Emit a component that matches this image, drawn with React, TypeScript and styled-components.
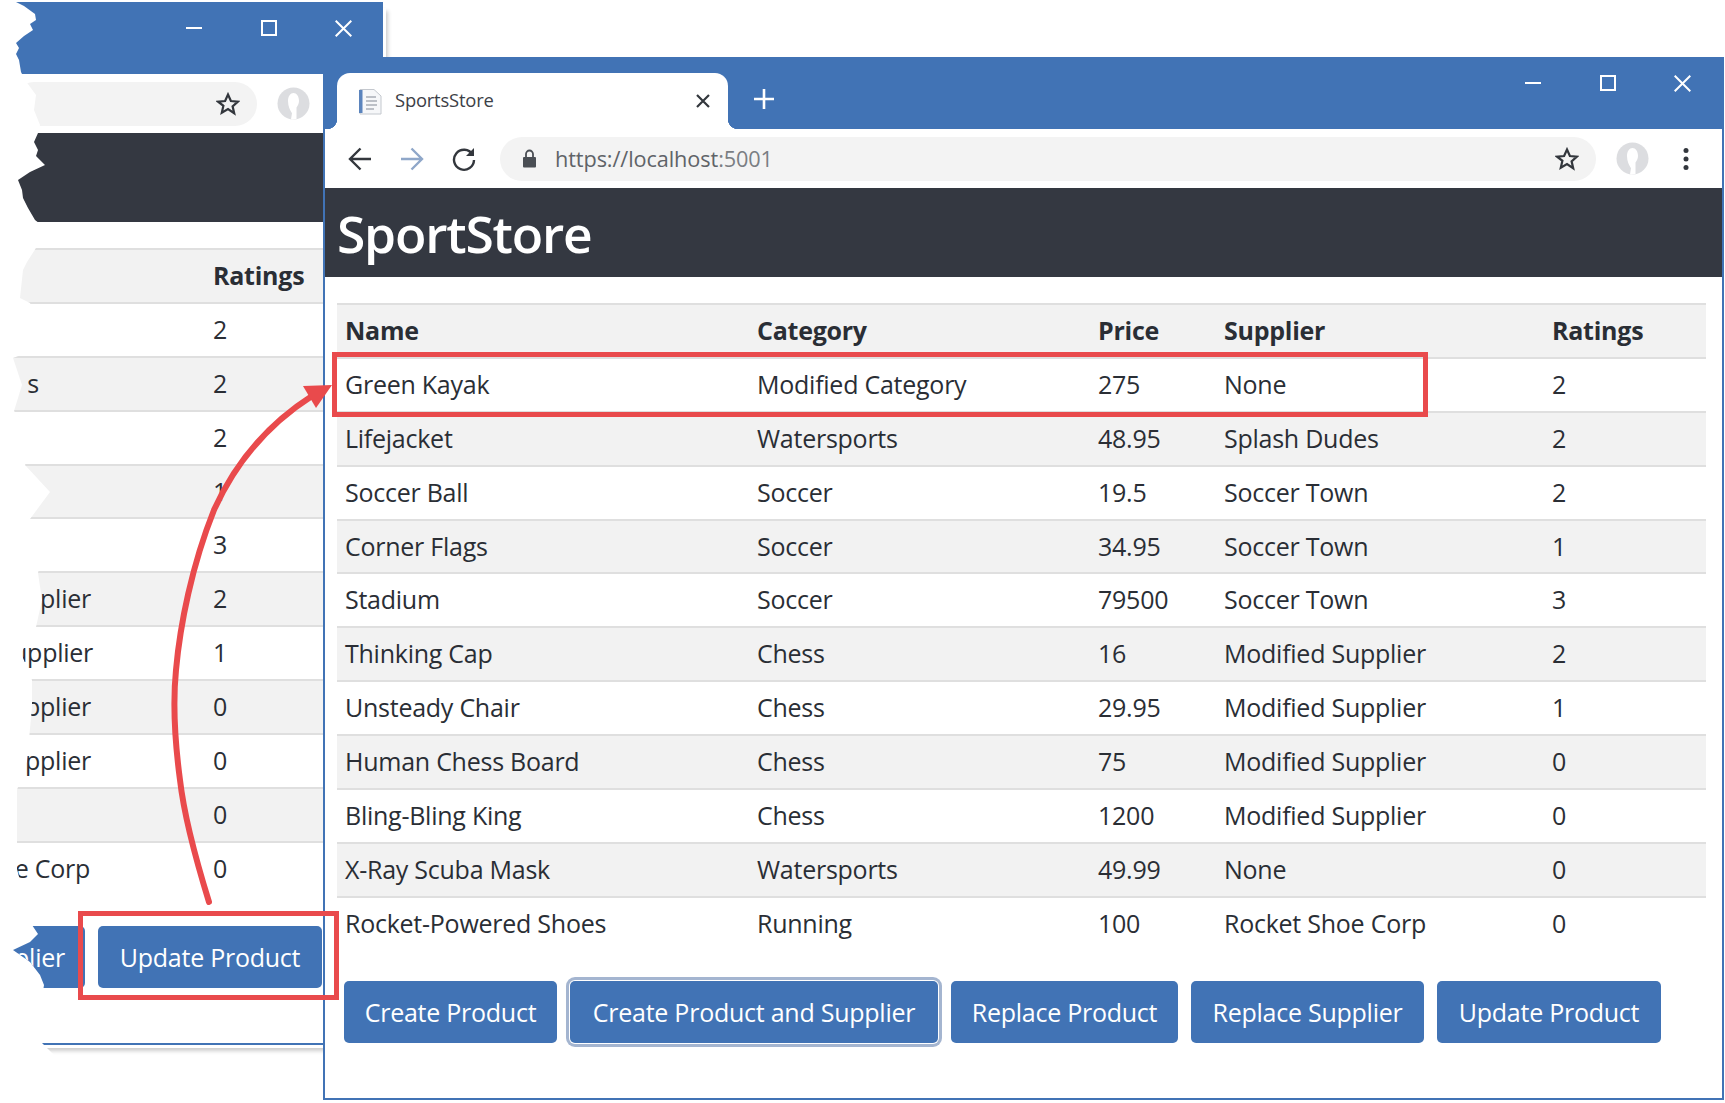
import styled, { createGlobalStyle } from 'styled-components';

const BLUE = '#4173b5';
const DARK = '#343841';
const RED = '#e94a4c';

const GlobalStyle = createGlobalStyle`
    html, body {
        margin: 0;
        padding: 0;
        background: #fff;
    }
    body {
        font-family: "Open Sans", "Noto Sans", "Liberation Sans", sans-serif;
        color: #2a2e35;
    }
`;

const Desktop = styled.div`
    position: relative;
    width: 1725px;
    height: 1103px;
    overflow: hidden;
    background: #fff;
`;

// the back window is torn along its left side
const TORN_EDGE = [
    [16, 2], [24, 6], [35, 14], [36, 20], [30, 24], [33, 30], [24, 36], [16, 43], [19, 48], [16, 54], [19, 60], [21, 72],
    [25, 80], [36, 95], [34, 110], [40, 125], [38, 133], [34, 142], [38, 150], [36, 156], [45, 165], [30, 172], [18, 180],
    [22, 190], [23, 198], [28, 208], [35, 220], [48, 230], [36, 248], [27, 262], [23, 270], [20, 298], [30, 303], [40, 330],
    [35, 350], [13, 358], [22, 385], [14, 411], [38, 440], [25, 465], [50, 492], [30, 519], [46, 545], [38, 573],
    [42, 600], [36, 627], [21, 653], [32, 680], [32, 707], [27, 761], [17, 790], [17, 869], [25, 900], [32, 925],
    [38, 934], [30, 942], [13, 950], [30, 962], [40, 975], [44, 985], [40, 1010], [39, 1040], [55, 1056], [395, 1056],
    [395, 0], [16, 0],
]
    .map(([x, y]) => `${x}px ${y}px`)
    .join(', ');

const BackShell = styled.div`
    position: absolute;
    left: 0;
    top: 0;
    width: 1725px;
    height: 1103px;
    clip-path: polygon(${TORN_EDGE});
`;

const Window = styled.div<{ $back?: boolean }>`
    position: absolute;
    box-sizing: border-box;
    display: flex;
    flex-direction: column;
    overflow: hidden;
    background: #fff;
    border: 2px solid ${BLUE};
    border-left-width: ${(p) => (p.$back ? '0' : '2px')};
    left: ${(p) => (p.$back ? '12px' : '323px')};
    top: ${(p) => (p.$back ? '2px' : '57px')};
    width: ${(p) => (p.$back ? '371px' : '1401px')};
    height: 1043px;
`;

const BackShadow = styled.div`
    position: absolute;
    left: 20px;
    top: 8px;
    width: 366px;
    height: 1040px;
    box-shadow: 2px 3px 4px rgba(0, 0, 0, 0.2);
`;

const TitleBar = styled.div`
    flex: 0 0 70px;
    display: flex;
    align-items: flex-start;
    background: ${BLUE};
    padding-left: 12px;
`;

const Tab = styled.div`
    position: relative;
    box-sizing: border-box;
    width: 391px;
    height: 56px;
    margin-top: 14px;
    padding: 0 18px 0 20px;
    display: flex;
    align-items: center;
    background: #fff;
    border-radius: 13px 13px 0 0;

    &::before,
    &::after {
        content: '';
        position: absolute;
        bottom: 0;
        width: 10px;
        height: 10px;
    }
    &::before {
        left: -10px;
        background: radial-gradient(circle at 0 0, ${BLUE} 10px, #fff 10.5px);
    }
    &::after {
        right: -10px;
        background: radial-gradient(circle at 100% 0, ${BLUE} 10px, #fff 10.5px);
    }
`;

const TabTitle = styled.span`
    flex: 1;
    margin: 0 0 3px 12px;
    font-size: 18.4px;
    color: #3c4047;
    letter-spacing: -0.2px;
`;

const NewTab = styled.div`
    display: flex;
    margin: 30px 0 0 26px;
`;

const WindowControls = styled.div<{ $back?: boolean }>`
    display: flex;
    margin: 6px ${(p) => (p.$back ? '0' : '2px')} 0 auto;
`;

const ControlButton = styled.div`
    width: 75px;
    height: 36px;
    display: flex;
    align-items: center;
    justify-content: center;
`;

const Toolbar = styled.div<{ $back?: boolean }>`
    flex: 0 0 59px;
    display: flex;
    align-items: center;
    padding-right: ${(p) => (p.$back ? '31px' : '33px')};
    background: #fff;
`;

const NavButtons = styled.div`
    display: flex;
    align-items: center;
    width: 175px;
    padding-left: 23px;
    gap: 27.5px;
    box-sizing: border-box;
`;

const Omnibox = styled.div`
    flex: 1;
    height: 44px;
    display: flex;
    align-items: center;
    padding: 0 17px 0 22px;
    background: #f3f3f3;
    border-radius: 22px;
`;

const Url = styled.span`
    margin: 0 0 1px 18px;
    font-size: 21.7px;
    color: #5f6368;
    letter-spacing: -0.1px;
    b {
        font-weight: 400;
        color: #7a7e83;
    }
`;

const OmniSpacer = styled.div`
    flex: 1;
`;

const Profile = styled.div`
    display: flex;
    align-items: center;
    margin-left: 20px;
    gap: 34px;
`;

const Masthead = styled.div`
    flex: 0 0 89px;
    display: flex;
    align-items: center;
    box-sizing: border-box;
    padding: 3px 12px 0;
    background: ${DARK};
    color: #fff;
`;

const Brand = styled.h1`
    margin: 0;
    font-size: 51.5px;
    font-weight: 600;
    line-height: 1;
    letter-spacing: -1.2px;
`;

const Content = styled.div<{ $back?: boolean }>`
    flex: 1;
    display: flex;
    flex-direction: column;
    padding: ${(p) => (p.$back ? '26px 14px 0 0' : '26px 16px 0 12px')};
`;

const Grid = styled.div`
    flex: none;
    font-size: 25px;
    letter-spacing: -0.25px;
`;

const Row = styled.div<{ $cols: string; $shade?: boolean }>`
    box-sizing: border-box;
    display: grid;
    grid-template-columns: ${(p) => p.$cols};
    align-items: center;
    height: 53.9px;
    padding-bottom: 2px;
    white-space: nowrap;
    border-top: 2px solid #dfdfdf;
    background: ${(p) => (p.$shade ? '#f2f2f2' : 'transparent')};
`;

const HeadCell = styled.div`
    padding: 0 8px;
    font-weight: 700;
`;

const Cell = styled.div`
    padding: 0 8px;
`;

// what is left of the supplier column after the tear, so it sits flush right
const TornCell = styled.div<{ $end: number }>`
    padding-right: ${(p) => p.$end}px;
    text-align: right;
`;

const ButtonRow = styled.div`
    flex: none;
    align-self: flex-end;
    display: flex;
    gap: 13px;
    margin: 31px 45px 0 0;
`;

const ActionButton = styled.button<{ $w: number; $focus?: boolean; $torn?: boolean }>`
    flex: none;
    box-sizing: border-box;
    width: ${(p) => p.$w}px;
    height: 62px;
    padding: ${(p) => (p.$torn ? '0 20px 0 0' : '0')};
    border: 0;
    border-radius: ${(p) => (p.$torn ? '0 5px 5px 0' : '5px')};
    background: ${BLUE};
    color: #fff;
    font: inherit;
    font-size: 25px;
    letter-spacing: -0.25px;
    text-align: ${(p) => (p.$torn ? 'right' : 'center')};
    white-space: nowrap;
    box-shadow: ${(p) => (p.$focus ? '0 0 0 1px #fff, 0 0 0 4px #a4b5d0' : 'none')};
`;

const Annotations = styled.svg`
    position: absolute;
    left: 0;
    top: 0;
    pointer-events: none;
`;

const IconSvg = styled.svg`
    display: block;
    flex: none;
`;

const ArrowIcon = ({ dir, color }: { dir: 'left' | 'right'; color: string }) => (
    <IconSvg width="24" height="24" viewBox="0 0 24 24" fill="none" stroke={color} strokeWidth="2.4">
        {dir === 'left' ? <path d="M23 12H2M12.5 1.5 2 12l10.5 10.5" /> : <path d="M1 12h21M11.5 1.5 22 12 11.5 22.5" />}
    </IconSvg>
);

const ReloadIcon = () => (
    <IconSvg width="26" height="26" viewBox="0 0 26 26" fill="none" stroke="#33373d" strokeWidth="2.4">
        <path d="M21.5 8.5A10 10 0 1 0 23 14" />
        <path d="M23 2v8h-8" fill="#33373d" stroke="none" />
    </IconSvg>
);

const LockIcon = () => (
    <IconSvg width="15" height="19" viewBox="0 0 15 19">
        <path d="M4 8V5a3.5 3.5 0 0 1 7 0v3" fill="none" stroke="#4a4e54" strokeWidth="1.8" />
        <rect x="1" y="8" width="13" height="10.5" rx="1" fill="#4a4e54" />
    </IconSvg>
);

const StarIcon = () => (
    <IconSvg width="24" height="24" viewBox="0 0 24 24" fill="none" stroke="#33373d" strokeWidth="2.2" strokeLinejoin="miter">
        <path d="M12 2.5l2.9 6.5 7 .7-5.3 4.6 1.6 6.9L12 17l-6.2 3.7 1.6-6.9L2.1 9.7l7-.7z" />
    </IconSvg>
);

const AvatarIcon = () => (
    <IconSvg width="33" height="33" viewBox="0 0 33 33">
        <circle cx="16.5" cy="16.5" r="16" fill="#dcdde0" />
        <path d="M11 14c0-5 2.5-8 5.5-8s5.5 3 5.5 8c0 3-1.5 5-2.5 6.5v11.5c-2 .5-4 .5-5.5.2l1-6c-2-3-4-7-4-12.2z" fill="#fff" />
    </IconSvg>
);

const MenuIcon = () => (
    <IconSvg width="6" height="24" viewBox="0 0 6 24" fill="#33373d">
        <circle cx="3" cy="3.5" r="2.5" />
        <circle cx="3" cy="12" r="2.5" />
        <circle cx="3" cy="20.5" r="2.5" />
    </IconSvg>
);

const PageIcon = () => (
    <IconSvg width="26" height="27" viewBox="0 0 26 27" fill="none">
        <path d="M3 1.5h14l7 6.5v18H3z" fill="#f6f7f9" stroke="#c4c8ce" />
        <rect x="2" y="2" width="3.5" height="23" fill="#5b84bd" />
        <path d="M9 9h10M9 13h11M9 17h11M9 21h8" stroke="#a9aeb6" strokeWidth="1.5" />
    </IconSvg>
);

const CloseTabIcon = () => (
    <IconSvg width="14" height="14" viewBox="0 0 14 14" stroke="#33373d" strokeWidth="2.2">
        <path d="M1 1l12 12M13 1 1 13" />
    </IconSvg>
);

const PlusIcon = () => (
    <IconSvg width="20" height="20" viewBox="0 0 20 20" stroke="#fff" strokeWidth="2.6">
        <path d="M10 0v20M0 10h20" />
    </IconSvg>
);

const MinIcon = () => (
    <IconSvg width="16" height="16" viewBox="0 0 16 16" stroke="#fff" strokeWidth="2">
        <path d="M0 8h16" />
    </IconSvg>
);

const MaxIcon = () => (
    <IconSvg width="16" height="16" viewBox="0 0 16 16" fill="none" stroke="#fff" strokeWidth="2">
        <rect x="1" y="1" width="14" height="14" />
    </IconSvg>
);

const CloseIcon = () => (
    <IconSvg width="17" height="17" viewBox="0 0 17 17" stroke="#fff" strokeWidth="2">
        <path d="M.7.7l15.6 15.6M16.3.7.7 16.3" />
    </IconSvg>
);

const products = [
    ['Green Kayak', 'Modified Category', '275', 'None', '2'],
    ['Lifejacket', 'Watersports', '48.95', 'Splash Dudes', '2'],
    ['Soccer Ball', 'Soccer', '19.5', 'Soccer Town', '2'],
    ['Corner Flags', 'Soccer', '34.95', 'Soccer Town', '1'],
    ['Stadium', 'Soccer', '79500', 'Soccer Town', '3'],
    ['Thinking Cap', 'Chess', '16', 'Modified Supplier', '2'],
    ['Unsteady Chair', 'Chess', '29.95', 'Modified Supplier', '1'],
    ['Human Chess Board', 'Chess', '75', 'Modified Supplier', '0'],
    ['Bling-Bling King', 'Chess', '1200', 'Modified Supplier', '0'],
    ['X-Ray Scuba Mask', 'Watersports', '49.99', 'None', '0'],
    ['Rocket-Powered Shoes', 'Running', '100', 'Rocket Shoe Corp', '0'],
];

const heads = ['Name', 'Category', 'Price', 'Supplier', 'Ratings'];
const FRONT_COLS = '412px 341px 126px 328px 162px';
const BACK_COLS = '193px 162px';

// the back window only shows what survives the tear
const backRows = [
    { text: '', end: 0, rating: '2' },
    { text: 's', end: 166, rating: '2' },
    { text: '', end: 0, rating: '2' },
    { text: '', end: 0, rating: '1' },
    { text: '', end: 0, rating: '3' },
    { text: 'plier', end: 114, rating: '2' },
    { text: 'upplier', end: 114, rating: '1' },
    { text: 'pplier', end: 114, rating: '0' },
    { text: 'pplier', end: 114, rating: '0' },
    { text: '', end: 0, rating: '0' },
    { text: 'e Corp', end: 115, rating: '0' },
];

const buttons = [
    { label: 'Create Product', w: 213 },
    { label: 'Create Product and Supplier', w: 368, focus: true },
    { label: 'Replace Product', w: 227 },
    { label: 'Replace Supplier', w: 233 },
    { label: 'Update Product', w: 224 },
];

const WinControls = ({ back }: { back?: boolean }) => (
    <WindowControls $back={back}>
        <ControlButton>
            <MinIcon />
        </ControlButton>
        <ControlButton>
            <MaxIcon />
        </ControlButton>
        <ControlButton>
            <CloseIcon />
        </ControlButton>
    </WindowControls>
);

export default function App() {
    return (
        <Desktop>
            <GlobalStyle />
            <BackShell>
                <BackShadow />
                <Window $back>
                    <TitleBar>
                        <WinControls back />
                    </TitleBar>
                    <Toolbar $back>
                        <Omnibox>
                            <OmniSpacer />
                            <StarIcon />
                        </Omnibox>
                        <Profile>
                            <AvatarIcon />
                            <MenuIcon />
                        </Profile>
                    </Toolbar>
                    <Masthead />
                    <Content $back>
                        <Grid>
                            <Row $cols={BACK_COLS} $shade>
                                <span />
                                <HeadCell>Ratings</HeadCell>
                            </Row>
                            {backRows.map((row, i) => (
                                <Row key={i} $cols={BACK_COLS} $shade={i % 2 === 1}>
                                    <TornCell $end={row.end}>{row.text}</TornCell>
                                    <Cell>{row.rating}</Cell>
                                </Row>
                            ))}
                        </Grid>
                        <ButtonRow>
                            <ActionButton $w={73} $torn>
                                plier
                            </ActionButton>
                            <ActionButton $w={224}>Update Product</ActionButton>
                        </ButtonRow>
                    </Content>
                </Window>
            </BackShell>

            <Window>
                <TitleBar>
                    <Tab>
                        <PageIcon />
                        <TabTitle>SportsStore</TabTitle>
                        <CloseTabIcon />
                    </Tab>
                    <NewTab>
                        <PlusIcon />
                    </NewTab>
                    <WinControls />
                </TitleBar>
                <Toolbar>
                    <NavButtons>
                        <ArrowIcon dir="left" color="#33373d" />
                        <ArrowIcon dir="right" color="#8fa7c9" />
                        <ReloadIcon />
                    </NavButtons>
                    <Omnibox>
                        <LockIcon />
                        <Url>
                            https://localhost<b>:5001</b>
                        </Url>
                        <OmniSpacer />
                        <StarIcon />
                    </Omnibox>
                    <Profile>
                        <AvatarIcon />
                        <MenuIcon />
                    </Profile>
                </Toolbar>
                <Masthead>
                    <Brand>SportStore</Brand>
                </Masthead>
                <Content>
                    <Grid>
                        <Row $cols={FRONT_COLS} $shade>
                            {heads.map((h) => (
                                <HeadCell key={h}>{h}</HeadCell>
                            ))}
                        </Row>
                        {products.map((row, i) => (
                            <Row key={row[0]} $cols={FRONT_COLS} $shade={i % 2 === 1}>
                                {row.map((value, c) => (
                                    <Cell key={c}>{value}</Cell>
                                ))}
                            </Row>
                        ))}
                    </Grid>
                    <ButtonRow>
                        {buttons.map((b) => (
                            <ActionButton key={b.label} $w={b.w} $focus={b.focus}>
                                {b.label}
                            </ActionButton>
                        ))}
                    </ButtonRow>
                </Content>
            </Window>

            <Annotations width="1725" height="1103" viewBox="0 0 1725 1103" fill="none" stroke={RED}>
                <rect x="334.5" y="354.5" width="1091" height="60" strokeWidth="5" />
                <rect x="80.5" y="913.5" width="256" height="84" strokeWidth="5" />
                <path
                    d="M209 902C196 860 184 815 180 780C174 735 173 700 176 670C180 625 192 565 214 510C232 470 262 428 312 396"
                    strokeWidth="6"
                    strokeLinecap="round"
                />
                <path d="M332 385L303 386L316 408Z" fill={RED} stroke="none" />
            </Annotations>
        </Desktop>
    );
}
